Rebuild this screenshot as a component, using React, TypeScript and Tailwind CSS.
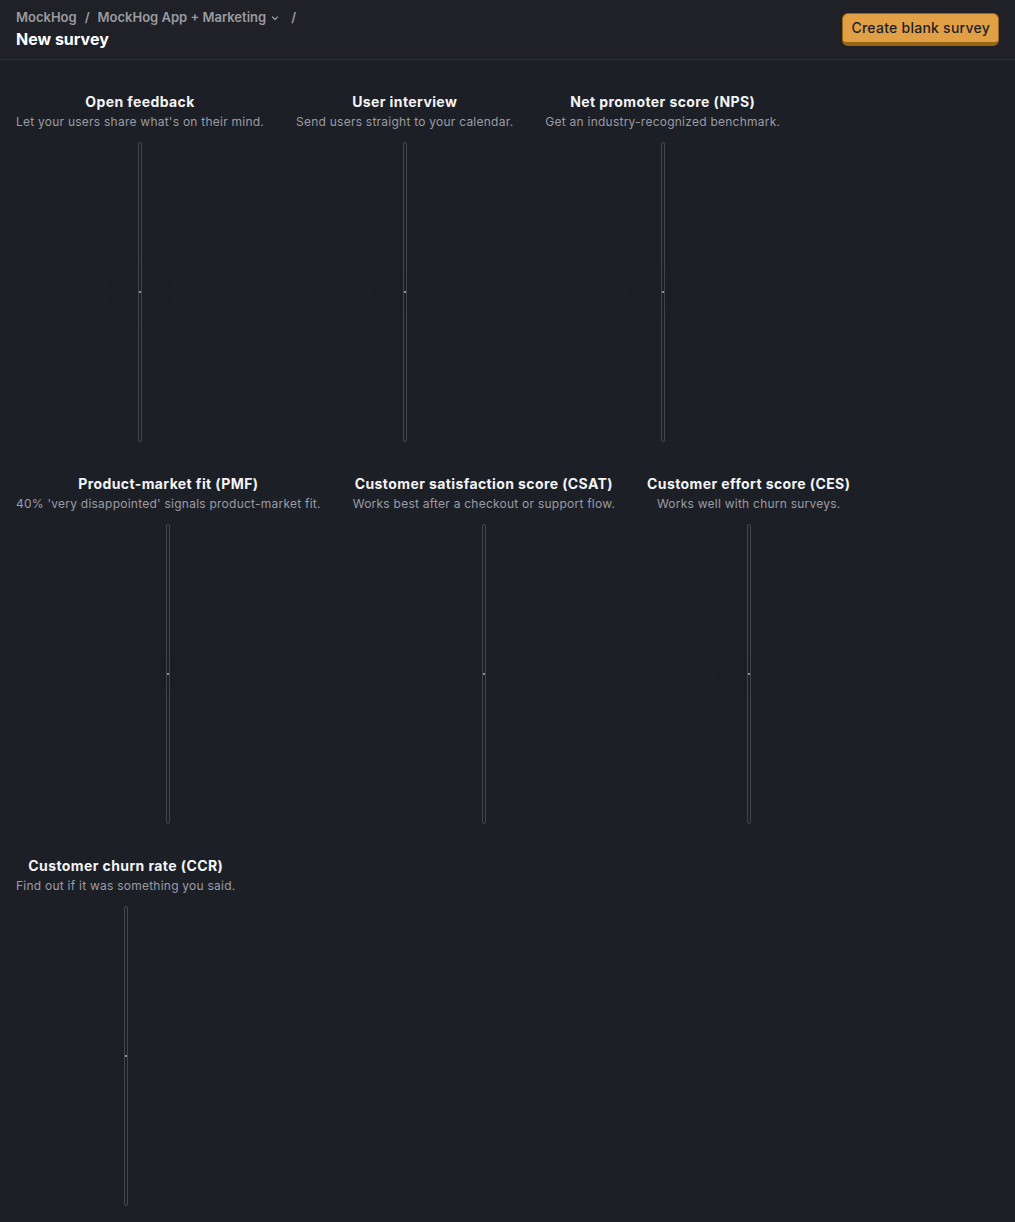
import React from "react";

const templates = [
  { title: "Open feedback", desc: "Let your users share what's on their mind." },
  { title: "User interview", desc: "Send users straight to your calendar." },
  { title: "Net promoter score (NPS)", desc: "Get an industry-recognized benchmark." },
  { title: "Product-market fit (PMF)", desc: "40% 'very disappointed' signals product-market fit." },
  { title: "Customer satisfaction score (CSAT)", desc: "Works best after a checkout or support flow." },
  { title: "Customer effort score (CES)", desc: "Works well with churn surveys." },
  { title: "Customer churn rate (CCR)", desc: "Find out if it was something you said." },
];

function Card({ title, desc }: { title: string; desc: string }) {
  return (
    <div className="flex flex-col items-center">
      <div className="text-[14px] font-bold leading-5 tracking-[0.4px] text-[#f3f4f6] whitespace-nowrap">{title}</div>
      <div className="mt-[2px] text-[12px] leading-4 tracking-[0.24px] text-[#9a9ca3] whitespace-nowrap">{desc}</div>
      <div className="relative mt-[12px] h-[300px] w-[4px] rounded-[2px] border border-[#45474f] bg-[#1d1f27] flex items-center justify-center">
        <div className="absolute left-1/2 top-1/2 h-[52px] w-[52px] -translate-x-1/2 -translate-y-1/2 rounded-full bg-black/[0.03] blur-[6px]" />
        <div className="relative h-[2px] w-[2px] bg-[#8c8e95]" />
      </div>
    </div>
  );
}

export default function App() {
  return (
    <div
      className="min-h-[1222px] bg-[#1d1f27]"
      style={{ fontFamily: "Inter, 'Noto Sans', sans-serif" }}
    >
      <header className="flex h-[60px] items-start justify-between border-b border-[#2e3038] bg-[#202127] px-4">
        <div className="pt-[10px]">
          <div className="flex h-4 items-center text-[13px] font-semibold text-[#9a9ba1]">
            <span>MockHog</span>
            <span className="mx-[8px]">/</span>
            <span>MockHog App + Marketing</span>
            <svg className="ml-[4px]" width="10" height="10" viewBox="0 0 10 10" fill="none">
              <path d="M2.5 4l2.5 2.5L7.5 4" stroke="#9a9ba1" strokeWidth="1.2" strokeLinecap="round" strokeLinejoin="round" />
            </svg>
            <span className="ml-[11px]">/</span>
          </div>
          <div className="mt-[1px] text-[16px] font-bold leading-6 text-white">New survey</div>
        </div>
        <button className="mt-[13px] h-[33px] rounded-[6px] border border-[#9a6512] border-b-[4px] bg-[#e1a045] px-[8px] text-[14px] font-medium leading-none tracking-[0.25px] text-[#1d1f27]">
          Create blank survey
        </button>
      </header>
      <main className="flex flex-wrap gap-8 px-4 pt-8 pb-4">
        {templates.map((t) => (
          <Card key={t.title} title={t.title} desc={t.desc} />
        ))}
      </main>
    </div>
  );
}
